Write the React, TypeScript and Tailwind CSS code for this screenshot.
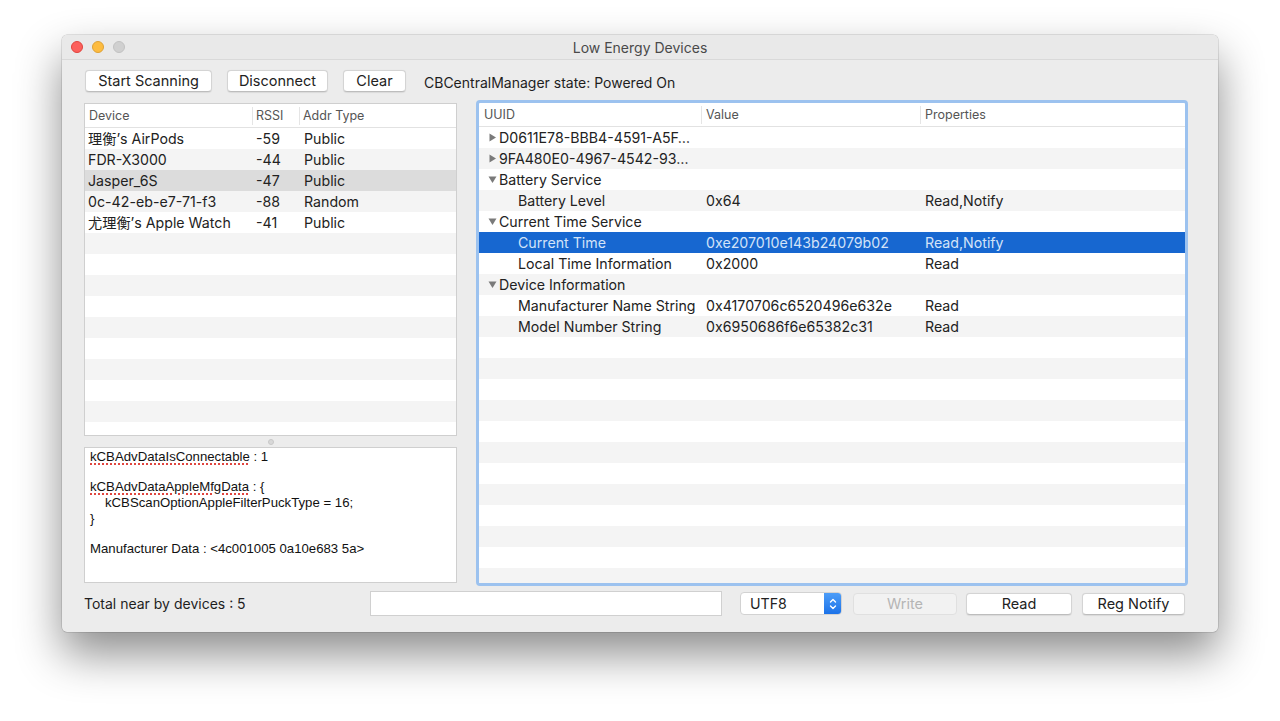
import React from "react";

const devices = [
  { name: "理衡’s AirPods", rssi: "-59", addr: "Public" },
  { name: "FDR-X3000", rssi: "-44", addr: "Public" },
  { name: "Jasper_6S", rssi: "-47", addr: "Public", selected: true },
  { name: "0c-42-eb-e7-71-f3", rssi: "-88", addr: "Random" },
  { name: "尤理衡’s Apple Watch", rssi: "-41", addr: "Public" },
];

type Row = {
  label: string;
  value?: string;
  props?: string;
  level: 0 | 1;
  open?: boolean;
  selected?: boolean;
};

const services: Row[] = [
  { label: "D0611E78-BBB4-4591-A5F…", level: 0, open: false },
  { label: "9FA480E0-4967-4542-93…", level: 0, open: false },
  { label: "Battery Service", level: 0, open: true },
  { label: "Battery Level", value: "0x64", props: "Read,Notify", level: 1 },
  { label: "Current Time Service", level: 0, open: true },
  { label: "Current Time", value: "0xe207010e143b24079b02", props: "Read,Notify", level: 1, selected: true },
  { label: "Local Time Information", value: "0x2000", props: "Read", level: 1 },
  { label: "Device Information", level: 0, open: true },
  { label: "Manufacturer Name String", value: "0x4170706c6520496e632e", props: "Read", level: 1 },
  { label: "Model Number String", value: "0x6950686f6e65382c31", props: "Read", level: 1 },
];

function Triangle({ open }: { open?: boolean }) {
  return (
    <svg width="9" height="9" viewBox="0 0 9 9" className="mr-[2px] shrink-0">
      {open ? <path d="M0.5 1.5h8L4.5 8z" fill="#7a7a7a" /> : <path d="M1.5 0.5v8L8 4.5z" fill="#7a7a7a" />}
    </svg>
  );
}

function Button({ children, className = "", disabled = false }: { children: React.ReactNode; className?: string; disabled?: boolean }) {
  return (
    <div
      className={`h-[22px] flex items-center justify-center rounded-[4px] text-[14.5px] ${
        disabled
          ? "bg-[#f2f2f2] text-[#b5b5b5] border border-[#e0e0e0]"
          : "bg-white text-[#222] border border-[#d4d4d4] border-b-[#bdbdbd] shadow-[0_0.5px_1px_rgba(0,0,0,0.08)]"
      } ${className}`}
    >
      {children}
    </div>
  );
}

const spell = "underline decoration-dotted decoration-[#e0453f] decoration-2 underline-offset-[2px]";

export default function App() {
  return (
    <div className="w-[1280px] h-[721px] bg-white overflow-hidden font-['Inter','Noto_Sans_CJK_SC',sans-serif] text-[#222]">
      <div className="ml-[62px] mt-[35px] w-[1156px] h-[597px] bg-[#ececec] rounded-[5px] flex flex-col shadow-[0_22px_45px_rgba(0,0,0,0.45),0_0_0_0.5px_rgba(0,0,0,0.2)]">
        {/* title bar */}
        <div className="relative h-[25px] flex items-center border-b border-[#d9d9d9] rounded-t-[5px] bg-[#e9e9e9]">
          <div className="flex gap-[9px] pl-[9px]">
            <span className="w-[12px] h-[12px] rounded-full bg-[#fc605c] border border-[#e0443e]" />
            <span className="w-[12px] h-[12px] rounded-full bg-[#fdbc40] border border-[#dea236]" />
            <span className="w-[12px] h-[12px] rounded-full bg-[#d0d0d0] border border-[#c2c2c2]" />
          </div>
          <div className="absolute inset-0 flex items-center justify-center text-[14px] text-[#4a4a4a] pointer-events-none">
            Low Energy Devices
          </div>
        </div>

        {/* toolbar */}
        <div className="flex items-center pl-[23px] mt-[10px] h-[22px]">
          <Button className="w-[127px]">Start Scanning</Button>
          <Button className="w-[101px] ml-[15px]">Disconnect</Button>
          <Button className="w-[63px] ml-[15px]">Clear</Button>
          <span className="ml-[18px] text-[14px] text-[#1e1e1e] mt-[2px]">CBCentralManager state: Powered On</span>
        </div>

        {/* main */}
        <div className="flex pl-[22px] mt-[11px] h-[480px]">
          {/* left column */}
          <div className="w-[373px] flex flex-col">
            <div className="h-[333px] bg-white border border-[#cfcfcf] flex flex-col overflow-hidden">
              <div className="h-[24px] pt-[1px] flex items-center text-[12.5px] text-[#555] border-b border-[#e2e2e2] shrink-0">
                <div className="w-[168px] pl-[4px] border-r border-[#e5e5e5] h-[18px] flex items-center">Device</div>
                <div className="w-[47px] pl-[3px] border-r border-[#e5e5e5] h-[18px] flex items-center">RSSI</div>
                <div className="pl-[3px]">Addr Type</div>
              </div>
              {Array.from({ length: 16 }).map((_, i) => {
                const d = devices[i];
                const bg = d?.selected ? "bg-[#dcdcdc]" : i % 2 === 1 ? "bg-[#f4f4f4]" : "bg-white";
                return (
                  <div key={i} className={`h-[21px] shrink-0 flex items-center text-[14.2px] ${bg}`}>
                    {d && (
                      <>
                        <div className="w-[168px] pl-[3px] whitespace-nowrap">{d.name}</div>
                        <div className="w-[48px] pl-[3px]">{d.rssi}</div>
                        <div className="pl-[3px]">{d.addr}</div>
                      </>
                    )}
                  </div>
                );
              })}
            </div>
            <div className="h-[11px] flex items-center justify-center">
              <span className="w-[6px] h-[6px] rounded-full bg-[#d8d8d8] border border-[#c8c8c8]" />
            </div>
            <div className="flex-1 bg-white border border-[#cfcfcf] px-[5px] pt-[1px] font-['Liberation_Sans',sans-serif] text-[13.2px] text-[#111] leading-[16px]">
              <div>
                <span className={spell}>kCBAdvDataIsConnectable</span> : 1
              </div>
              <div className="h-[14px]" />
              <div>
                <span className={spell}>kCBAdvDataAppleMfgData</span> : {"{"}
              </div>
              <div className="pl-[15px]">kCBScanOptionAppleFilterPuckType = 16;</div>
              <div>{"}"}</div>
              <div className="h-[14px]" />
              <div>Manufacturer Data : &lt;4c001005 0a10e683 5a&gt;</div>
            </div>
          </div>

          {/* right column */}
          <div className="ml-[19px] w-[712px] h-[486px] -mt-[3px] rounded-[4px] border-[3px] border-[#9cc2ef] bg-white overflow-hidden flex flex-col">
            <div className="h-[24px] pt-[1px] flex items-center text-[12.5px] text-[#555] border-b border-[#e2e2e2] shrink-0">
              <div className="w-[223px] pl-[5px] border-r border-[#e5e5e5] h-[18px] flex items-center">UUID</div>
              <div className="w-[219px] pl-[4px] border-r border-[#e5e5e5] h-[18px] flex items-center">Value</div>
              <div className="pl-[4px]">Properties</div>
            </div>
            {Array.from({ length: 23 }).map((_, i) => {
              const r = services[i];
              const bg = r?.selected ? "bg-[#1767d0]" : i % 2 === 1 ? "bg-[#f4f4f4]" : "bg-white";
              const fg = r?.selected ? "text-[#d3e3f8]" : "text-[#222]";
              return (
                <div key={i} className={`h-[21px] shrink-0 flex items-center text-[14.2px] ${bg} ${fg}`}>
                  {r && (
                    <>
                      <div className={`w-[223px] flex items-center whitespace-nowrap ${r.level === 0 ? "pl-[9px]" : "pl-[39px]"}`}>
                        {r.level === 0 && <Triangle open={r.open} />}
                        {r.label}
                      </div>
                      <div className="w-[219px] pl-[4px]">{r.value}</div>
                      <div className="pl-[4px]">{r.props}</div>
                    </>
                  )}
                </div>
              );
            })}
          </div>
        </div>

        {/* bottom bar */}
        <div className="flex items-center pl-[22px] mt-[8px] h-[25px]">
          <span className="w-[286px] text-[14px] text-[#1e1e1e]">Total near by devices : 5</span>
          <div className="w-[352px] h-[25px] bg-white border border-[#d0d0d0]" />
          <div className="ml-[18px] w-[102px] h-[23px] flex rounded-[4px] bg-white border border-[#d2d2d2] overflow-hidden">
            <span className="flex-1 pl-[9px] flex items-center text-[14.2px]">UTF8</span>
            <div className="w-[17px] bg-gradient-to-b from-[#4c9df8] to-[#1b72e8] flex items-center justify-center">
              <svg width="8" height="14" viewBox="0 0 8 14" fill="none" stroke="white" strokeWidth="1.4" strokeLinecap="round" strokeLinejoin="round">
                <path d="M1.5 5L4 2.5L6.5 5" />
                <path d="M1.5 9L4 11.5L6.5 9" />
              </svg>
            </div>
          </div>
          <Button disabled className="ml-[11px] w-[104px]">Write</Button>
          <Button className="ml-[9px] w-[106px]">Read</Button>
          <Button className="ml-[10px] w-[103px]">Reg Notify</Button>
        </div>
      </div>
    </div>
  );
}
